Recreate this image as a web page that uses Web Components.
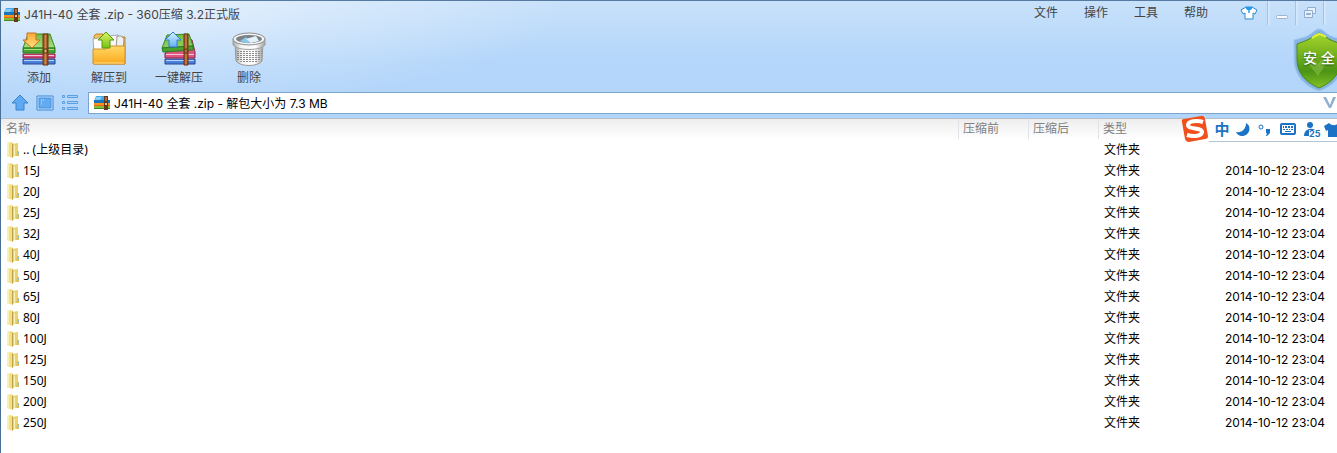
<!DOCTYPE html>
<html lang="zh-CN">
<head>
<meta charset="utf-8">
<title>J41H-40 全套 .zip - 360压缩 3.2正式版</title>
<style>
  html, body {
    height: 100%;
  }

  body {
    margin: 0;
    overflow: hidden;
    font: 12px/20px Inter, "Noto Sans CJK SC", sans-serif;
    color: #000;
    background: #fff;
  }
</style>
</head>
<body>
<zip-window></zip-window>

<script>
const svgIcons = {
  archive: `
    <svg viewBox="0 0 18 16" width="18" height="16">
      <path d="M3 1h9l4 5H1z" fill="#45a7e8"/>
      <path d="M1 5h16v3H1z" fill="#1976bb"/>
      <path d="M3 2h6L7 5H2z" fill="#85cef8"/>
      <path d="M1 8h16v3H1z" fill="#f7931e"/>
      <path d="M1 10h16v1H1z" fill="#e9641c"/>
      <path d="M1 11h16v3H1z" fill="#7fc131"/>
      <path d="M1 13h16v1H1z" fill="#46872c"/>
      <path d="M11 1h4v14h-4z" fill="#65371c"/>
      <path d="M12 2h2v4h-2z" fill="#a8703f"/>
      <path d="M12 8h2v2h-2z" fill="#e7c48a"/>
    </svg>`,
  add: `
    <svg viewBox="0 0 36 36" width="36" height="36">
      <defs>
        <linearGradient id="green" x2="0" y2="1"><stop stop-color="#6fbd45"/><stop offset="1" stop-color="#a9df80"/></linearGradient>
        <linearGradient id="arrow" x2="0" y2="1"><stop stop-color="#ffa938"/><stop offset="1" stop-color="#ffdf7e"/></linearGradient>
        <linearGradient id="belt" x2="1" y2="0"><stop stop-color="#8a4a1c"/><stop offset=".5" stop-color="#cf8443"/><stop offset="1" stop-color="#7d3f17"/></linearGradient>
      </defs>
      <path d="M2 28h32v5H2z" fill="#4a80d8" stroke="#24479a"/>
      <path d="M3 29h30v1H3z" fill="#b4d6fb"/>
      <path d="M2 23h32v4H2z" fill="#d8487a" stroke="#8f2348"/>
      <path d="M3 24h30v1H3z" fill="#f8c3d2"/>
      <path d="M7 3h22l5 14H2z" fill="url(#green)" stroke="#3f8a25"/>
      <path d="M2 17h32v5H2z" fill="#4aa32f" stroke="#2f7a1d"/>
      <path d="M3 18h30v1H3z" fill="#a5dc84"/>
      <path d="M22 3h5v31h-5z" fill="url(#belt)" stroke="#6c3516"/>
      <path d="M23 18h3v4h-3z" fill="#e4b776" stroke="#5e320e"/>
      <path d="M6 2h9v7h4l-8 8-9-8h4z" fill="url(#arrow)" stroke="#c7731b"/>
    </svg>`,
  extract: `
    <svg viewBox="0 0 36 36" width="36" height="36">
      <defs>
        <linearGradient id="folder" x2="0" y2="1"><stop stop-color="#ffd964"/><stop offset="1" stop-color="#fba81e"/></linearGradient>
        <linearGradient id="lime" x2="0" y2="1"><stop stop-color="#dcf46a"/><stop offset="1" stop-color="#77c20f"/></linearGradient>
      </defs>
      <path d="M3 33V5l2-2h7l2 3h20v27z" fill="#efc057" stroke="#bd8426"/>
      <path d="M2 8l11-2 3 14H3z" fill="#fff" stroke="#aaa"/>
      <path d="M18 5l9-1v15H17z" fill="#f8f8f8" stroke="#aaa"/>
      <path d="M26 5h4l3 3-1 11h-7z" fill="#f0f0f0" stroke="#999"/>
      <path d="M2 18h13l3-3h16v18H2z" fill="url(#folder)" stroke="#d0902a"/>
      <path d="M3 32h30" stroke="#ffe18c"/>
      <path d="M15 1l8 8h-4v8h-8V9H7z" fill="url(#lime)" stroke="#5a960e"/>
    </svg>`,
  oneKey: `
    <svg viewBox="0 0 36 36" width="36" height="36">
      <defs>
        <linearGradient id="green" x2="0" y2="1"><stop stop-color="#6fbd45"/><stop offset="1" stop-color="#8fd064"/></linearGradient>
        <linearGradient id="blue" x2="0" y2="1"><stop stop-color="#d6efff"/><stop offset="1" stop-color="#5db2f8"/></linearGradient>
        <linearGradient id="belt" x2="1" y2="0"><stop stop-color="#8a4a1c"/><stop offset=".5" stop-color="#cf8443"/><stop offset="1" stop-color="#7d3f17"/></linearGradient>
      </defs>
      <path d="M4 28h30v5H4z" fill="#4a80d8" stroke="#24479a"/>
      <path d="M5 29h28v1H5z" fill="#b4d6fb"/>
      <path d="M4 22l25-14 2 1 3 12v6H4z" fill="#dd5581" stroke="#8f2348"/>
      <path d="M5 23h28v1H5z" fill="#f8c3d2"/>
      <path d="M6 4l22-1 4 12-31 2z" fill="url(#green)" stroke="#3f8a25"/>
      <path d="M1 17l31-2v4L2 21z" fill="#4aa32f" stroke="#2f7a1d"/>
      <path d="M23 3h4v31h-4z" fill="url(#belt)" stroke="#6c3516"/>
      <path d="M24 18h2v4h-2z" fill="#e4b776" stroke="#5e320e"/>
      <path d="M12 1l8 8h-4v7H8V9H4z" fill="url(#blue)" stroke="#347dcc"/>
    </svg>`,
  trash: `
    <svg viewBox="0 0 36 36" width="36" height="36">
      <defs>
        <linearGradient id="can" x2="1" y2="0"><stop stop-color="#a5a5a5"/><stop offset=".25" stop-color="#f4f4f4"/><stop offset=".7" stop-color="#fff"/><stop offset="1" stop-color="#a0a0a0"/></linearGradient>
        <pattern id="holes" width="3" height="2" patternUnits="userSpaceOnUse"><path d="M0 0h2v1H0z" fill="#8a8a8a"/></pattern>
      </defs>
      <path d="M4 12h28l-1 18c-4 6-22 6-26 0z" fill="url(#can)" stroke="#999"/>
      <path d="M5 18c6 3 20 3 26 0l-1 11c-5 4-19 4-24 0z" fill="url(#holes)"/>
      <path d="M2 8v6c4 6 28 6 32 0V8z" fill="url(#can)" stroke="#a0a0a0"/>
      <ellipse cx="18" cy="8" rx="16" ry="6" fill="#f4f4f4" stroke="#8e8e8e"/>
      <ellipse cx="18" cy="8" rx="13" ry="4" fill="#7b8085"/>
      <path d="M9 10l6-4 5 6q-7 1-11-2z" fill="#8cc5e6"/>
      <path d="M15 8l10-3 3 5-8 2z" fill="#e4f2fb"/>
    </svg>`,
  up: `
    <svg viewBox="0 0 18 18" width="18" height="18">
      <path d="M9 1l8 8h-4v7H5V9H1z" fill="#5fa9f0" stroke="#3a84d2"/>
    </svg>`,
  preview: `
    <svg viewBox="0 0 18 18" width="18" height="18">
      <path d="M1 2h16v14H1z" fill="#c3e0fb" stroke="#3f86d4"/>
      <path d="M3 4h12v10H3z" fill="#62abf0" stroke="#4a90da"/>
      <path d="M5 6h1M7 6h1M5 8h1M5 10h1" stroke="#c8e4ff"/>
    </svg>`,
  list: `
    <svg viewBox="0 0 18 18" width="18" height="18" fill="#a9d2fa" stroke="#5b9fe2">
      <path d="M1.500 1.500h2v2h-2zM6.500 1.500h10v2h-10zM1.500 7.500h2v2h-2zM6.500 7.500h10v2h-10zM1.500 13.500h2v2h-2zM6.500 13.500h10v2h-10z"/>
    </svg>`,
  folder: `
    <svg viewBox="0 0 14 16" width="14" height="16">
      <path d="M1 1l4-1 2 1v15l-6-2z" fill="#f3df85"/>
      <path d="M1 1l2-1v14l-2-1z" fill="#fbf0b4"/>
      <path d="M6 2l6-1v12l-6 2z" fill="#e9d274"/>
      <path d="M6 2l1-1v14l-1 1z" fill="#bda345"/>
      <path d="M8 4l1-1v10l-1 1z" fill="#fbf3c2"/>
      <path d="M11 9h2v5h-3z" fill="#dcc25d"/>
      <path d="M12 10h1v2h-1z" fill="#8dbdcb"/>
    </svg>`,
  skin: `
    <svg viewBox="0 0 18 16" width="18" height="16">
      <path d="M6 2L1 5l2 4 2-1v6h8V8l2 1 2-4-5-3z" fill="#fff" stroke="#2e8ad2"/>
      <path d="M5 2h8l-2 3H7z" fill="#279be8"/>
      <path d="M8 5h2v3H8z" fill="#5fb9f1"/>
    </svg>`,
  minimize: `
    <svg viewBox="0 0 14 14" width="14" height="14">
      <rect x="1.500" y="9.500" width="11" height="3" rx="1" fill="#f6faff" stroke="#9db5cf"/>
    </svg>`,
  restore: `
    <svg viewBox="0 0 14 14" width="14" height="14" fill="#e4f1fe" stroke="#93aecb">
      <path d="M4.500 1.500h8v6h-8z"/>
      <path d="M1.500 4.500h8v7h-8z"/>
      <path d="M3.500 7.500h4v1h-4z" fill="none"/>
    </svg>`
};

class ZipMenu extends HTMLElement {
  constructor() {
    super();

    this.attachShadow({ mode: 'open' });

    this.shadowRoot.innerHTML = `
      <style>
        :host {
          display: flex;
          height: 24px;
        }

        button {
          width: 50px;
          padding: 0;
          border: 0;
          background: none;
          color: #444;
          font: inherit;
        }

        button.skin {
          width: 46px;
          padding-left: 10px;
        }

        button.control {
          width: 28px;
          border-left: 1px solid #a6c4e2;
          background: linear-gradient(90deg, #d8eafd, transparent 3px);
        }

        button.close {
          width: 14px;
        }

        svg {
          display: block;
          margin: 0 auto;
        }
      </style>

      <button type="button">文件</button>
      <button type="button">操作</button>
      <button type="button">工具</button>
      <button type="button">帮助</button>
      <button type="button" class="skin" aria-label="换肤">${svgIcons.skin}</button>
      <button type="button" class="control" aria-label="最小化">${svgIcons.minimize}</button>
      <button type="button" class="control" aria-label="还原">${svgIcons.restore}</button>
      <button type="button" class="control close" aria-label="关闭"></button>
    `;
  }
}

class TitleBar extends HTMLElement {
  constructor() {
    super();

    this.attachShadow({ mode: 'open' });

    this.shadowRoot.innerHTML = `
      <style>
        :host {
          display: flex;
          justify-content: space-between;
          height: 28px;
        }

        h1 {
          display: flex;
          align-items: center;
          gap: 3px;
          margin: 0;
          padding-left: 2px;
          color: #444;
          font-size: 12px;
          font-weight: 400;
          white-space: nowrap;
        }
      </style>

      <h1>${svgIcons.archive}<slot></slot></h1>
      <zip-menu></zip-menu>
    `;
  }
}

class ToolButton extends HTMLElement {
  constructor() {
    super();

    this.attachShadow({ mode: 'open' });

    this.shadowRoot.innerHTML = `
      <style>
        :host {
          display: block;
          width: 70px;
        }

        button {
          display: flex;
          flex-direction: column;
          align-items: center;
          gap: 1px;
          width: 100%;
          padding: 0;
          border: 0;
          background: none;
          color: #444;
          font: inherit;
        }
      </style>

      <button type="button">
        ${svgIcons[this.getAttribute('icon')]}
        <slot></slot>
      </button>
    `;
  }
}

class AddressBar extends HTMLElement {
  constructor() {
    super();

    this.attachShadow({ mode: 'open' });

    this.shadowRoot.innerHTML = `
      <style>
        :host {
          display: flex;
          align-items: center;
          gap: 7px;
          height: 30px;
          padding-left: 10px;
        }

        button {
          flex: none;
          padding: 0;
          border: 0;
          background: none;
        }

        svg {
          display: block;
        }

        #address__field {
          display: flex;
          flex: 1;
          align-items: center;
          gap: 3px;
          height: 20px;
          margin-left: 2px;
          padding-left: 4px;
          border: 1px solid #7ba3cb;
          border-right: 0;
          background: #fff;
        }

        input {
          flex: 1;
          min-width: 0;
          height: 20px;
          padding: 1px 0 0;
          box-sizing: border-box;
          border: 0;
          outline: 0;
          background: none;
          color: #000;
          font: inherit;
        }

        #address__drop {
          padding-right: 1px;
        }
      </style>

      <button type="button" aria-label="向上">${svgIcons.up}</button>
      <button type="button" aria-label="预览">${svgIcons.preview}</button>
      <button type="button" aria-label="列表">${svgIcons.list}</button>
      <div id="address__field">
        ${svgIcons.archive}
        <input type="text" aria-label="地址" value="J41H-40 全套 .zip - 解包大小为 7.3 MB">
        <button type="button" id="address__drop" aria-label="展开">
          <svg viewBox="0 0 13 12" width="13" height="12"><path d="M0 0h3l4 8 3-8h3L8 11H6z" fill="#8eafd1"/></svg>
        </button>
      </div>
    `;
  }
}

class FileList extends HTMLElement {
  constructor() {
    super();

    this.attachShadow({ mode: 'open' });

    const names = ['.. (上级目录)', '15J', '20J', '25J', '32J', '40J', '50J', '65J',
      '80J', '100J', '125J', '150J', '200J', '250J'];

    // The parent folder entry has no date
    const rows = names.map((name, index) => `
      <tr>
        <td><span class="name">${svgIcons.folder}${name}</span></td>
        <td></td>
        <td></td>
        <td>文件夹</td>
        <td>${index ? '2014-10-12 23:04' : ''}</td>
      </tr>
    `).join('');

    this.shadowRoot.innerHTML = `
      <style>
        :host {
          display: block;
        }

        table {
          width: 100%;
          border-collapse: separate;
          border-spacing: 0;
          table-layout: fixed;
        }

        th, td {
          height: 21px;
          padding: 0 0 0 6px;
          text-align: left;
          line-height: 20px;
          white-space: nowrap;
        }

        th {
          box-sizing: border-box;
          height: 20px;
          padding-left: 4px;
          border-left: 1px solid #e1e1e8;
          background: linear-gradient(#ededed, #fff);
          color: #808080;
          font-weight: 400;
        }

        th:first-child {
          padding-left: 5px;
          border-left: 0;
        }

        td:first-child {
          padding-left: 5px;
        }

        th:last-child {
          border-left: 0;
        }

        .size {
          width: 70px;
        }

        .type {
          width: 121px;
        }

        .date {
          width: 118px;
        }

        .name {
          display: flex;
          align-items: center;
          gap: 3px;
          font-family: "Noto Sans", "Noto Sans CJK SC", sans-serif;
        }
      </style>

      <table>
        <thead>
          <tr>
            <th>名称</th>
            <th class="size">压缩前</th>
            <th class="size">压缩后</th>
            <th class="type">类型</th>
            <th class="date"></th>
          </tr>
        </thead>
        <tbody>${rows}</tbody>
      </table>
    `;
  }
}

class SafetyShield extends HTMLElement {
  constructor() {
    super();

    this.attachShadow({ mode: 'open' });

    this.shadowRoot.innerHTML = `
      <style>
        :host {
          display: grid;
          width: 52px;
          height: 64px;
          color: #fff;
          font-size: 14px;
          font-weight: 500;
        }

        svg, span {
          grid-area: 1 / 1;
        }

        span {
          align-self: center;
          padding: 0 0 4px 10px;
          text-shadow: 0 1px 2px #24590a;
          white-space: pre;
        }
      </style>

      <svg viewBox="0 0 52 64" width="52" height="64">
        <defs>
          <linearGradient id="shield" x2="0" y2="1">
            <stop stop-color="#a8d62c"/>
            <stop offset=".35" stop-color="#79b51f"/>
            <stop offset=".7" stop-color="#4c9415"/>
            <stop offset="1" stop-color="#83c326"/>
          </linearGradient>
        </defs>
        <path d="M26 1c-4 0-8 6-14 8L1 12v19c0 17 12 28 25 32 13-4 25-15 25-32V12L40 9C34 7 30 1 26 1z" fill="#87b4e4" stroke="#a0c9f1"/>
        <path d="M26 5c-5 2-8 6-14 8l-8 3v16c0 14 10 23 22 28 12-5 22-14 22-28V16l-8-3c-6-2-9-6-14-8z" fill="url(#shield)" stroke="#4b8a1c"/>
        <path d="M33 9q-5-3-7-3-3 1-7 4" fill="none" stroke="#e2f23c" stroke-width="2"/>
        <path d="M14 34l5-4 6 6 11-13 4 2-15 23z" fill="#a5cf65" opacity=".4"/>
      </svg>
      <span>安 全</span>
    `;
  }
}

class ImeBar extends HTMLElement {
  constructor() {
    super();

    this.attachShadow({ mode: 'open' });

    this.shadowRoot.innerHTML = `
      <style>
        :host {
          display: flex;
          align-items: center;
          height: 28px;
          color: #1c73c5;
          background: linear-gradient(#fff, #fff) 12px 4px / 100% 22px no-repeat;
        }

        #ime__logo {
          width: 28px;
          height: 28px;
        }

        #ime__mode {
          width: 26px;
          text-align: center;
          font-size: 15px;
          font-weight: 700;
        }

        #ime__icons {
          width: 102px;
          height: 22px;
        }

        #ime__tray {
          display: flex;
          align-items: center;
          height: 22px;
          margin-top: 2px;
          border-bottom: 1px solid #b3c4d5;
        }
      </style>

      <svg id="ime__logo" viewBox="0 0 28 28">
        <path d="M3 4l17-3q3-1 4 3l3 17q0 3-3 3L8 27q-3 0-4-3L1 7q-1-3 2-3z" fill="#f1501d"/>
        <path d="M22 7C16 5 7 6 7 10c0 5 14 2 14 7 0 4-8 5-15 3" fill="none" stroke="#fff" stroke-width="4"/>
      </svg>
      <div id="ime__tray">
        <span id="ime__mode">中</span>
        <svg id="ime__icons" viewBox="0 0 102 22" fill="currentColor">
          <path d="M11 4c6 3 4 13-4 13-3 0-5-2-6-4 6 1 10-3 10-9z"/>
          <circle cx="26" cy="8" r="2" fill="none" stroke="currentColor"/>
          <path d="M31 10h4v4l-3 3h-1l1-3h-1z"/>
          <rect x="46" y="5" width="14" height="10" rx="1" fill="#fff" stroke="currentColor" stroke-width="2"/>
          <path d="M48 7h1v2h-1zM50 7h2v2h-2zM53 7h2v2h-2zM56 7h2v2h-2zM48 10h2v1h-2zM51 10h2v1h-2zM54 10h1v1h-1zM56 10h2v1h-2zM50 12h6v1h-6z"/>
          <circle cx="75" cy="6" r="3"/>
          <path d="M69 17c0-9 12-9 13-3v3z"/>
          <path d="M74 11h12v8H74z" fill="#fff"/>
          <text x="74" y="18" font-size="9" font-weight="700">25</text>
          <path d="M94 4l-5 3 2 5 2-1v7h10V4c-2 3-6 3-9 0z"/>
        </svg>
      </div>
    `;
  }
}

class ZipWindow extends HTMLElement {
  constructor() {
    super();

    this.attachShadow({ mode: 'open' });

    this.shadowRoot.innerHTML = `
      <style>
        :host {
          display: block;
          position: relative;
          box-sizing: border-box;
          height: 100vh;
          overflow: hidden;
          border-top: 1px solid #557ba2;
          border-left: 1px solid #496f96;
        }

        header {
          border-bottom: 1px solid #b8bec6;
          background:
            radial-gradient(ellipse 440px 110px at 130px 0, rgba(255, 255, 255, 0.55), transparent),
            linear-gradient(#c8e1fa, #b4d6fa 50%, #b2d5fb);
        }

        nav {
          display: flex;
          height: 59px;
          padding: 2px 0 0 3px;
          box-sizing: border-box;
        }

        /* Both float over the window and run past its right edge */
        safety-shield {
          position: absolute;
          top: 27px;
          right: -8px;
        }

        ime-bar {
          position: absolute;
          top: 114px;
          right: 0;
        }
      </style>

      <header>
        <title-bar>J41H-40 全套 .zip - 360压缩 3.2正式版</title-bar>
        <nav>
          <tool-button icon="add">添加</tool-button>
          <tool-button icon="extract">解压到</tool-button>
          <tool-button icon="oneKey">一键解压</tool-button>
          <tool-button icon="trash">删除</tool-button>
        </nav>
        <address-bar></address-bar>
      </header>
      <file-list></file-list>
      <safety-shield></safety-shield>
      <ime-bar></ime-bar>
    `;
  }
}

customElements.define('zip-menu', ZipMenu);
customElements.define('title-bar', TitleBar);
customElements.define('tool-button', ToolButton);
customElements.define('address-bar', AddressBar);
customElements.define('file-list', FileList);
customElements.define('safety-shield', SafetyShield);
customElements.define('ime-bar', ImeBar);
customElements.define('zip-window', ZipWindow);
</script>
</body>
</html>
